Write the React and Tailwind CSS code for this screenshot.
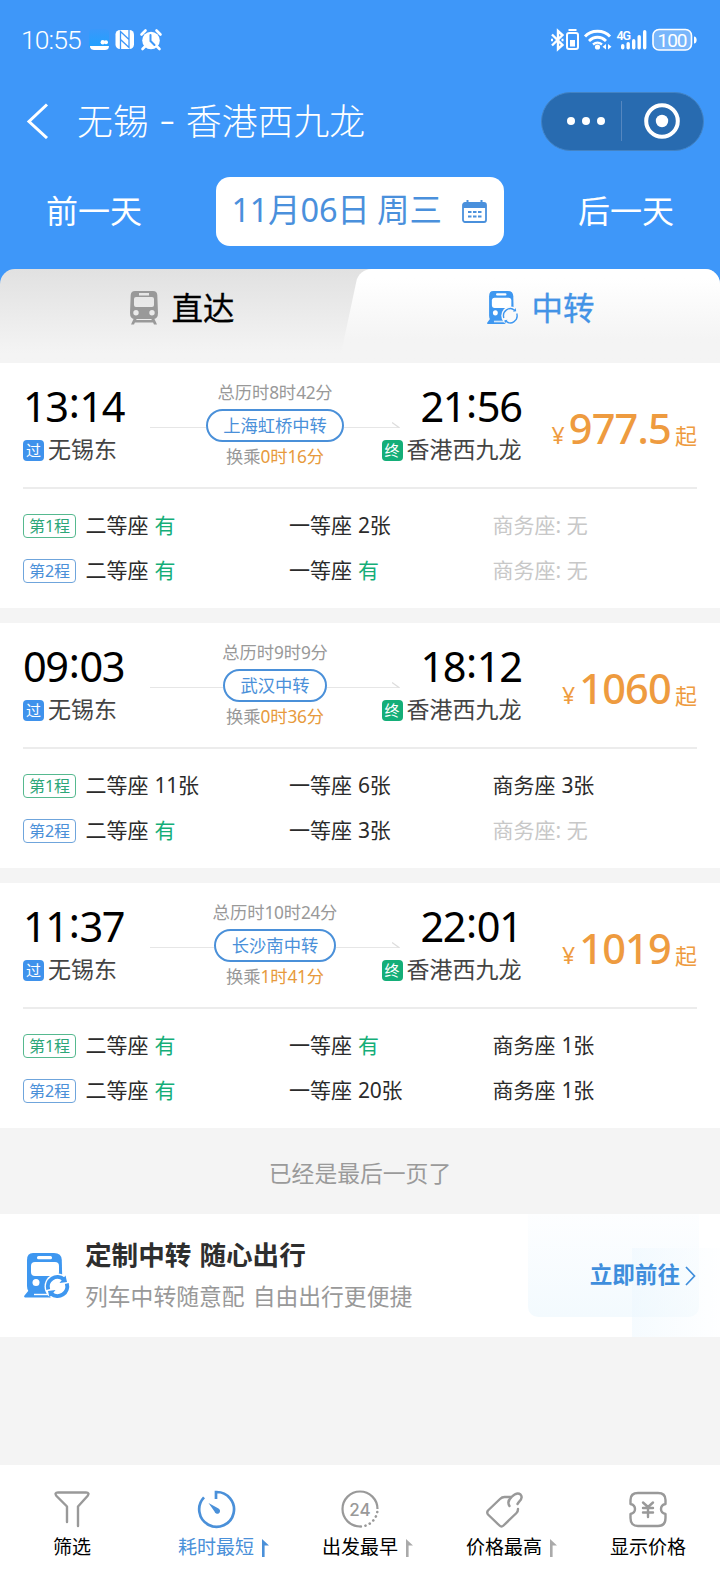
import clsx from 'clsx';

const trips = [
  {
    depart: '13:14', arrive: '21:56', from: '无锡东', to: '香港西九龙',
    total: '总历时8时42分', via: '上海虹桥中转', wait: '0时16分', price: '977.5',
    legs: [
      [['二等座', '有'], ['一等座', '2张'], ['商务座', '无']],
      [['二等座', '有'], ['一等座', '有'], ['商务座', '无']],
    ],
  },
  {
    depart: '09:03', arrive: '18:12', from: '无锡东', to: '香港西九龙',
    total: '总历时9时9分', via: '武汉中转', wait: '0时36分', price: '1060',
    legs: [
      [['二等座', '11张'], ['一等座', '6张'], ['商务座', '3张']],
      [['二等座', '有'], ['一等座', '3张'], ['商务座', '无']],
    ],
  },
  {
    depart: '11:37', arrive: '22:01', from: '无锡东', to: '香港西九龙',
    total: '总历时10时24分', via: '长沙南中转', wait: '1时41分', price: '1019',
    legs: [
      [['二等座', '有'], ['一等座', '有'], ['商务座', '1张']],
      [['二等座', '有'], ['一等座', '20张'], ['商务座', '1张']],
    ],
  },
];

const StatusBar = () => (
  <div className="flex h-[80px] items-center justify-between pl-[21px] pr-[22px]">
    <div className="flex items-center">
      <span className="w-[67px] whitespace-nowrap font-['Roboto'] text-[26.500px] font-light tracking-[-0.9px]">10:55</span>
      {/* app, NFC, alarm */}
      <svg width="76" height="24" viewBox="0 0 76 24">
        <defs>
          <linearGradient id="app" x1="0" y1="0" x2="0" y2="1">
            <stop offset="0" stopColor="#3a98fa" />
            <stop offset="1" stopColor="#1fa2ff" />
          </linearGradient>
        </defs>
        <rect x="1" y="1" width="20" height="20" rx="4" fill="url(#app)" />
        <path d="M2 18h19c0 3-2 4-4 4H7c-3 0-5-1-5-4z" fill="#fff" />
        <circle cx="14.8" cy="14.3" r="2.2" fill="#fff" />
        <circle cx="18" cy="14.3" r="2" fill="#fff" />
        <rect x="27.500" y="2" width="18.500" height="19" rx="4.500" fill="#fff" />
        <path d="M32.500 21V3.500l8.500 8M41 2v17.500l-8.500-8" fill="none" stroke="#3e97f9" strokeWidth="1.300" />
        <circle cx="63" cy="12.500" r="8.800" fill="#fff" />
        <path d="M53.500 6.500l4-4M72.500 6.500l-4-4M57.500 18l-3 3M68.500 18l3 3" stroke="#fff" strokeWidth="2.600" strokeLinecap="round" />
        <path d="M62.500 7v6l4 4" fill="none" stroke="#3e97f9" strokeWidth="2" strokeLinecap="round" />
      </svg>
    </div>

    <svg width="148" height="24" viewBox="0 0 148 24">
      <g fill="none" stroke="#fff" strokeWidth="2">
        <path d="M2 6.500l10.500 10.500L8 21V3l4.500 4L2 17.500" strokeWidth="2.400" />
        <path d="M1 12h2M11.500 12h2" strokeWidth="2.600" />
        <rect x="17" y="5" width="11" height="16" rx="2" />
        <path d="M18.500 2h8" />
        <path d="M35 8.500c6-7 19-7 25 0M39 13c5-5 12-5 17 0" strokeWidth="2.800" />
        <path d="M43 16.500c3-2.500 6-2.500 9 0" strokeWidth="2.400" />
      </g>
      <rect x="20" y="12" width="5" height="6.500" fill="#fff" />
      <g fill="#fff">
        <circle cx="47.500" cy="19" r="2.600" />
        <path d="M56 16v5.500l-3.500-2.700zM58 16v5.500l3.500-2.700z" />
        <text x="66.500" y="11.500" fontFamily="Roboto" fontSize="12.500" fontWeight="600" textLength="14.500">4G</text>
        <rect x="71" y="16" width="3.400" height="5.500" rx="1.700" />
        <rect x="76.500" y="14" width="3.400" height="7.500" rx="1.700" />
        <rect x="82" y="11" width="3.400" height="10.500" rx="1.700" />
        <rect x="87.500" y="7" width="3.400" height="14.500" rx="1.700" />
        <rect x="93" y="2" width="3.400" height="19.500" rx="1.700" />
        <path d="M144 8.500c3.500 0 3.500 7 0 7z" />
        <text x="107.500" y="18.500" fontFamily="Roboto" fontSize="19" textLength="30">100</text>
      </g>
      <rect x="103" y="1.500" width="38.500" height="20.500" rx="6" fill="#fff" fillOpacity="0.3" stroke="#fff" strokeWidth="1.600" />
    </svg>
  </div>
);

const TitleBar = () => (
  <div className="flex h-[82px] items-center pl-[26px] pr-[16px]">
    <svg width="24" height="36" viewBox="0 0 24 36" fill="none" stroke="#fff" strokeWidth="3">
      <path d="M21 1.500L3 18.500L21 35" />
    </svg>
    <h1 className="ml-[27px] flex flex-1 items-center whitespace-nowrap pb-[4px] text-[35.900px] font-light leading-[44px]">
      无锡
      <span className="w-[37px] text-center font-['Noto_Sans'] text-[28px] font-normal">–</span>
      香港西九龙
    </h1>
    <div className="flex h-[59px] w-[163px] items-center rounded-full border border-[#4383c4] bg-[#286bb0]">
      <div className="flex w-[80px] items-center gap-[7px] border-r border-[#5587c0] py-4 pl-[25px]">
        <i className="size-2 rounded-full bg-white" />
        <i className="size-2 rounded-full bg-white" />
        <i className="size-2 rounded-full bg-white" />
      </div>
      <svg className="ml-[22px]" width="36" height="36" viewBox="0 0 36 36">
        <circle cx="18" cy="18" r="15.800" fill="none" stroke="#fff" strokeWidth="4" />
        <circle cx="18" cy="18" r="6.200" fill="#fff" />
      </svg>
    </div>
  </div>
);

const DateBar = () => (
  <div className="flex h-[107px] items-start justify-between px-[46px] pt-[15px] text-[32px]">
    <span className="leading-[64px]">前一天</span>
    <div className="ml-[-1px] flex h-[69px] w-[288px] items-center justify-between rounded-[14px] bg-white pl-[16px] pr-[17px] text-[#4a90dc]">
      <span className="whitespace-nowrap pb-[5px] text-[32.500px] leading-[44px]">
        <Num>11</Num>月<Num>06</Num>日 周三
      </span>
      <svg width="25" height="23" viewBox="0 0 25 23" fill="none" stroke="currentColor">
        <rect x="1" y="3" width="23" height="19" rx="2" strokeWidth="1.800" />
        <path d="M1 5.500h23" strokeWidth="5" />
        <path d="M5.500 0v5M19.500 0v5" strokeWidth="2" />
        <path d="M6 12h13.500M6 16.500h13.500" strokeWidth="2" strokeDasharray="3.500 1.500" />
      </svg>
    </div>
    <span className="leading-[64px]">后一天</span>
  </div>
);

const Num = ({ children }) => (
  <span className="font-['Noto_Sans'] tracking-[-0.3px]">{children}</span>
);

const TrainIcon = () => (
  <svg width="30" height="34" viewBox="0 0 30 34" fill="#999">
    <path fillRule="evenodd" d="M6 0h18q4 0 4.300 4L29 22q0 6-5 6H6q-5 0-5-6L1.700 4Q2 0 6 0zM10 2v2.500h10V2zM7 6q-2 0-2 2v6q0 2 2 2h16q2 0 2-2V8q0-2-2-2zM7 19a2.700 2.700 0 100 5.400A2.700 2.700 0 007 19zM23 19a2.700 2.700 0 100 5.400A2.700 2.700 0 0023 19z" />
    <path d="M5 27l-3 6.500h3l.9-2h18.200l.9 2h3L25 27h-3l.8 2H7.200l.8-2z" />
  </svg>
);

// Train with the circular transfer arrows in its lower right corner
const TransferIcon = ({ size, bold, ring }) => (
  <svg width={size} height={bold ? size : 34} viewBox="0 0 46 46" preserveAspectRatio="none" className="shrink-0">
    <path d="M9 0h21q7.500 0 7.800 7L38.500 36q0 3-3 4H9q-6 0-6-7V7q0-7 6-7z" fill="#3e97f0" />
    <path d="M5 37h8l-3.500 3H28v4.500H1q-1.500-.5-.5-2z" fill="#3e97f0" />
    <path d="M10 41.500h16" stroke="#fff" strokeWidth="1.400" />
    <rect x="13" y="3" width="15" height="3.200" rx="1.500" fill="#fff" />
    <path d="M11 9h20q4 0 4 4v6q0 4-4 4H11q-4 0-4-4v-6q0-4 4-4z" fill="#fff" />
    <circle cx="12" cy="29.500" r="3.500" fill="#fff" />
    <circle cx="33.500" cy="33.500" r="13" fill={ring} />
    <g fill="none" stroke="#3e97f0" strokeWidth={bold ? 4 : 2}>
      <path d="M24.200 36.500a9.700 9.700 0 0 1 15.500-10.300" />
      <path d="M42.800 30.500a9.700 9.700 0 0 1-15.500 10.300" />
    </g>
    {bold ? (
      <path d="M35.500 30l7.500-1-1.500-6.500zM31.500 37l-7.500 1 1.500 6.500z" fill="#3e97f0" />
    ) : (
      <path d="M37.500 28l4.500-.5-.8-4.500zM29.500 39l-4.500.5.8 4.500z" fill="#3e97f0" />
    )}
  </svg>
);

const Tabs = () => (
  <div className="bg-[#3e97f9]">
    <div className="relative flex h-[94px] overflow-hidden rounded-t-[15px] bg-linear-to-b from-[#e1e1e1] to-[#f4f4f4] to-90% pb-[16px] text-[31.500px]">
      <div className="absolute inset-y-0 left-[349px] -right-10 -skew-x-12 rounded-tl-[12px] bg-linear-to-b from-white from-10% to-[#f4f4f4] to-75%" />
      <div className="relative flex flex-1 items-center justify-center gap-[12px] pl-[3px] text-black">
        <TrainIcon />
        <span className="pb-[5px] leading-[44px] [-webkit-text-stroke:0.3px]">直达</span>
      </div>
      <div className="relative flex flex-1 items-center justify-center gap-[12px] pl-[1px] text-[#4393e6]">
        <TransferIcon size={32} ring="#fafafa" />
        <span className="pb-[5px] leading-[44px] [-webkit-text-stroke:0.3px]">中转</span>
      </div>
    </div>
  </div>
);

const Badge = ({ color, children }) => (
  <span className={clsx('mr-1 mt-[2px] flex size-[21px] shrink-0 items-center justify-center rounded-[4px] text-[15px] text-white', color)}>
    {children}
  </span>
);

const Time = ({ value }) => {
  const [hour, minute] = value.split(':');
  return (
    <div className="flex font-['Noto_Sans'] text-[41.500px] leading-[48px] tracking-[-1.400px] text-black">
      {hour}
      <span className="-mt-[4px] mb-[4px] pl-[1px] pr-[1px]">:</span>
      {minute}
    </div>
  );
};

const Seat = ({ name, count }) => {
  const none = count === '无';
  const parts = count.match(/^(\d*)(.*)$/);
  return (
    <div className={clsx('w-[203.500px] whitespace-nowrap', none ? 'text-[#c8c8c8]' : 'text-[#2b2b2b]')}>
      {name}
      {none && <Num>:</Num>}
      <span className={clsx('ml-[6px]', count === '有' && 'text-[#14ae78]')}>
        <Num>{parts[1]}</Num>{parts[2]}
      </span>
    </div>
  );
};

// Mixed digits and Chinese on one line
const Mixed = ({ text }) =>
  text.split(/(\d+)/).map((s, i) => (/^\d+$/.test(s) ? <Num key={i}>{s}</Num> : s));

const TripCard = ({ trip }) => (
  <section className="h-[245px] bg-white px-[23px]">
    <div className="flex h-[126px] border-b-2 border-[#ececec]">
      <div className="w-[127px] pt-[19px]">
        <Time value={trip.depart} />
        <div className="flex h-[38px] items-center whitespace-nowrap text-[23px] text-[#444]">
          <Badge color="bg-[#3f92ec]">过</Badge>
          <span className="pb-[2px]">{trip.from}</span>
        </div>
      </div>

      <div className="flex w-[250px] flex-col items-center pt-[16px] text-[17.300px] text-[#999]">
        <div className="h-[30px] leading-[26px]"><Mixed text={trip.total} /></div>
        <div className="flex w-full items-center">
          <div className="mt-[4px] h-[1.500px] flex-1 bg-[#e6e6e6]" />
          <div className="h-[33px] rounded-full border-2 border-[#4a90d9] px-[15.500px] leading-[28px] text-[#4a90d9]">
            {trip.via}
          </div>
          <div className="mt-[4px] h-[1.500px] flex-1 bg-[#e6e6e6]" />
          <svg className="-ml-[8px] -mt-[1px]" width="8" height="6" viewBox="0 0 8 6" fill="none" stroke="#ddd">
            <path d="M0 .5L7 5.500" strokeWidth="1.300" />
          </svg>
        </div>
        <div className="leading-[28px]">
          换乘<span className="text-[#e79a3c]"><Mixed text={trip.wait} /></span>
        </div>
      </div>

      <div className="flex w-[121.500px] flex-col items-end pt-[19px]">
        <Time value={trip.arrive} />
        <div className="flex h-[38px] items-center whitespace-nowrap text-[23px] text-[#444]">
          <Badge color="bg-[#14ae78]">终</Badge>
          <span className="pb-[2px]">{trip.to}</span>
        </div>
      </div>

      <div className="flex flex-1 items-baseline justify-end whitespace-nowrap pt-[37px] text-[#ee9b3f]">
        <span className="mr-[4px] font-['Noto_Sans'] text-[23px]">¥</span>
        <span className="font-['Noto_Sans'] text-[41.500px] font-medium leading-[56px] tracking-[-0.8px]">{trip.price}</span>
        <span className="ml-[4px] text-[22px] leading-[30px]">起</span>
      </div>
    </div>

    <div className="pt-[14px] text-[21px]">
      {trip.legs.map((seats, i) => (
        <div key={i} className="flex h-[44.500px] items-center">
          <span
            className={clsx(
              'mr-[9.500px] mt-[2px] h-[24px] w-[53px] rounded-[4px] border-[1.500px] text-center text-[16px] leading-[20px]',
              i === 0 ? 'border-[#56b98f] text-[#2da678]' : 'border-[#6fa5dc] text-[#4a90d9]'
            )}
          >
            第<Num>{i + 1}</Num>程
          </span>
          {seats.map(([name, count]) => (
            <Seat key={name} name={name} count={count} />
          ))}
        </div>
      ))}
    </div>
  </section>
);

const PromoBanner = () => (
  <section className="flex h-[123px] items-center overflow-hidden bg-white pl-[24px]">
    <TransferIcon size={46} bold ring="#fff" />
    <div className="ml-[15px] flex-1 whitespace-nowrap pb-[2px]">
      <div className="text-[26.600px] font-bold leading-[42px] text-[#2e2e2e] [word-spacing:2px]">定制中转 随心出行</div>
      <div className="text-[22.800px] leading-[41px] text-[#999] [word-spacing:3px]">列车中转随意配 自由出行更便捷</div>
    </div>
    <div className="relative flex h-full w-[192px] items-center justify-end pr-[24px] text-[22.600px] font-bold text-[#3f8edc]">
      <div className="absolute left-0 top-0 h-[103px] w-[171px] rounded-b-[10px] bg-linear-to-b from-[#fdfeff] to-[#f3fafe]" />
      <div className="absolute right-0 top-[34px] h-[89px] w-[88px] bg-linear-to-r from-[#ecf7fe]/50 to-[#fdfeff]/50" />
      <span className="relative pb-[3px] leading-[34px]">立即前往</span>
      <svg className="relative ml-[5px]" width="11" height="20" viewBox="0 0 11 20" fill="none" stroke="currentColor" strokeWidth="1.700">
        <path d="M1 1l8.500 9L1 19" />
      </svg>
    </div>
  </section>
);

const FilterIcon = () => (
  <svg width="40" height="40" viewBox="0 0 40 40" fill="none" stroke="#999" strokeWidth="2.400" strokeLinecap="round" strokeLinejoin="round">
    <path d="M15 33V17.500L4.500 7Q2 3.500 6 3.500H34Q38 3.500 35.500 7L26 17.500V37" />
  </svg>
);

const TimerIcon = () => (
  <svg width="40" height="40" viewBox="0 0 40 40" fill="none" stroke="#4a90d9" strokeWidth="2.700">
    <path d="M20 10V3A17.400 17.400 0 1 1 8 8.400" />
    <path d="M12.500 14l10 5.500a2.800 2.800 0 1 1-4 3z" fill="#4a90d9" stroke="none" />
  </svg>
);

const Clock24Icon = () => (
  <svg width="40" height="40" viewBox="0 0 40 40" fill="none" stroke="#999" strokeWidth="2.200">
    <path d="M20 37.500A17.500 17.500 0 1 1 37.500 20" />
    <path d="M37.300 23A17.500 17.500 0 0 1 20 37.500" strokeDasharray="0.1 4.600" strokeWidth="2.600" strokeLinecap="round" />
    <text x="20" y="26.500" textAnchor="middle" fontFamily="Inter" fontSize="17" fontWeight="500" fill="#999" stroke="none">24</text>
  </svg>
);

const PriceTagIcon = () => (
  <svg width="40" height="40" viewBox="0 0 40 40" fill="none" stroke="#999" strokeWidth="2.400" strokeLinecap="round" strokeLinejoin="round">
    <path d="M27 8H20.500Q18 8 16 10L4 21.500Q2.500 23.500 4 25.500L15.500 36.500Q17.500 38.500 19.500 36.500L32.500 24Q34 22.500 34 20" />
    <path d="M25.500 17Q22.500 12.500 27.500 8Q33 2.500 36.500 5.500Q39.500 9 34.500 13.500L33.500 15" />
  </svg>
);

const VoucherIcon = () => (
  <svg width="40" height="40" viewBox="0 0 40 40" fill="none" stroke="#999" strokeWidth="2.400" strokeLinecap="round" strokeLinejoin="round">
    <path d="M10 4H30Q37.500 4 37.500 11V15Q33 16 33 20Q33 24 37.500 25V29Q37.500 37 30 37H10Q2.500 37 2.500 29V25Q7 24 7 20Q7 16 2.500 15V11Q2.500 4 10 4Z" />
    <path d="M15 13.500l5 4.500 5-4.500M20 18.500V28M15 19h10M15 23.500h10" strokeWidth="2.400" />
  </svg>
);

const sorts = [
  { label: '筛选', icon: FilterIcon },
  { label: '耗时最短', icon: TimerIcon, arrow: true, active: true },
  { label: '出发最早', icon: Clock24Icon, arrow: true },
  { label: '价格最高', icon: PriceTagIcon, arrow: true },
  { label: '显示价格', icon: VoucherIcon },
];

const BottomBar = () => (
  <nav className="grid h-[119px] grid-cols-5 bg-white pt-[24px]">
    {sorts.map(({ label, icon: Icon, arrow, active }) => (
      <div key={label} className="flex flex-col items-center">
        <Icon />
        <div className={clsx('relative mt-[2px] whitespace-nowrap text-[19px] leading-[30px]', active ? 'text-[#4a90d9]' : 'text-black')}>
          {label}
          {arrow && (
            <svg className={clsx('absolute left-full top-[8px] ml-[8px]', !active && 'text-[#aaa]')} width="8" height="18" viewBox="0 0 8 18" fill="currentColor">
              <path d="M0 0l7 6.500H2.600V18H0z" />
            </svg>
          )}
        </div>
      </div>
    ))}
  </nav>
);

export default function App() {
  return (
    <div className="flex h-[1584px] w-[720px] flex-col overflow-hidden bg-[#f4f4f4] font-['Noto_Sans_CJK_SC',sans-serif]">
      <header className="bg-[#3e97f9] text-white">
        <StatusBar />
        <TitleBar />
        <DateBar />
      </header>
      <Tabs />
      <main className="flex flex-1 flex-col">
        <div className="flex flex-col gap-[15px]">
          {trips.map((trip) => (
            <TripCard key={trip.depart} trip={trip} />
          ))}
        </div>
        <p className="h-[86px] text-center text-[22.800px] leading-[89px] text-[#9a9a9a]">已经是最后一页了</p>
        <PromoBanner />
      </main>
      <BottomBar />
    </div>
  );
}
